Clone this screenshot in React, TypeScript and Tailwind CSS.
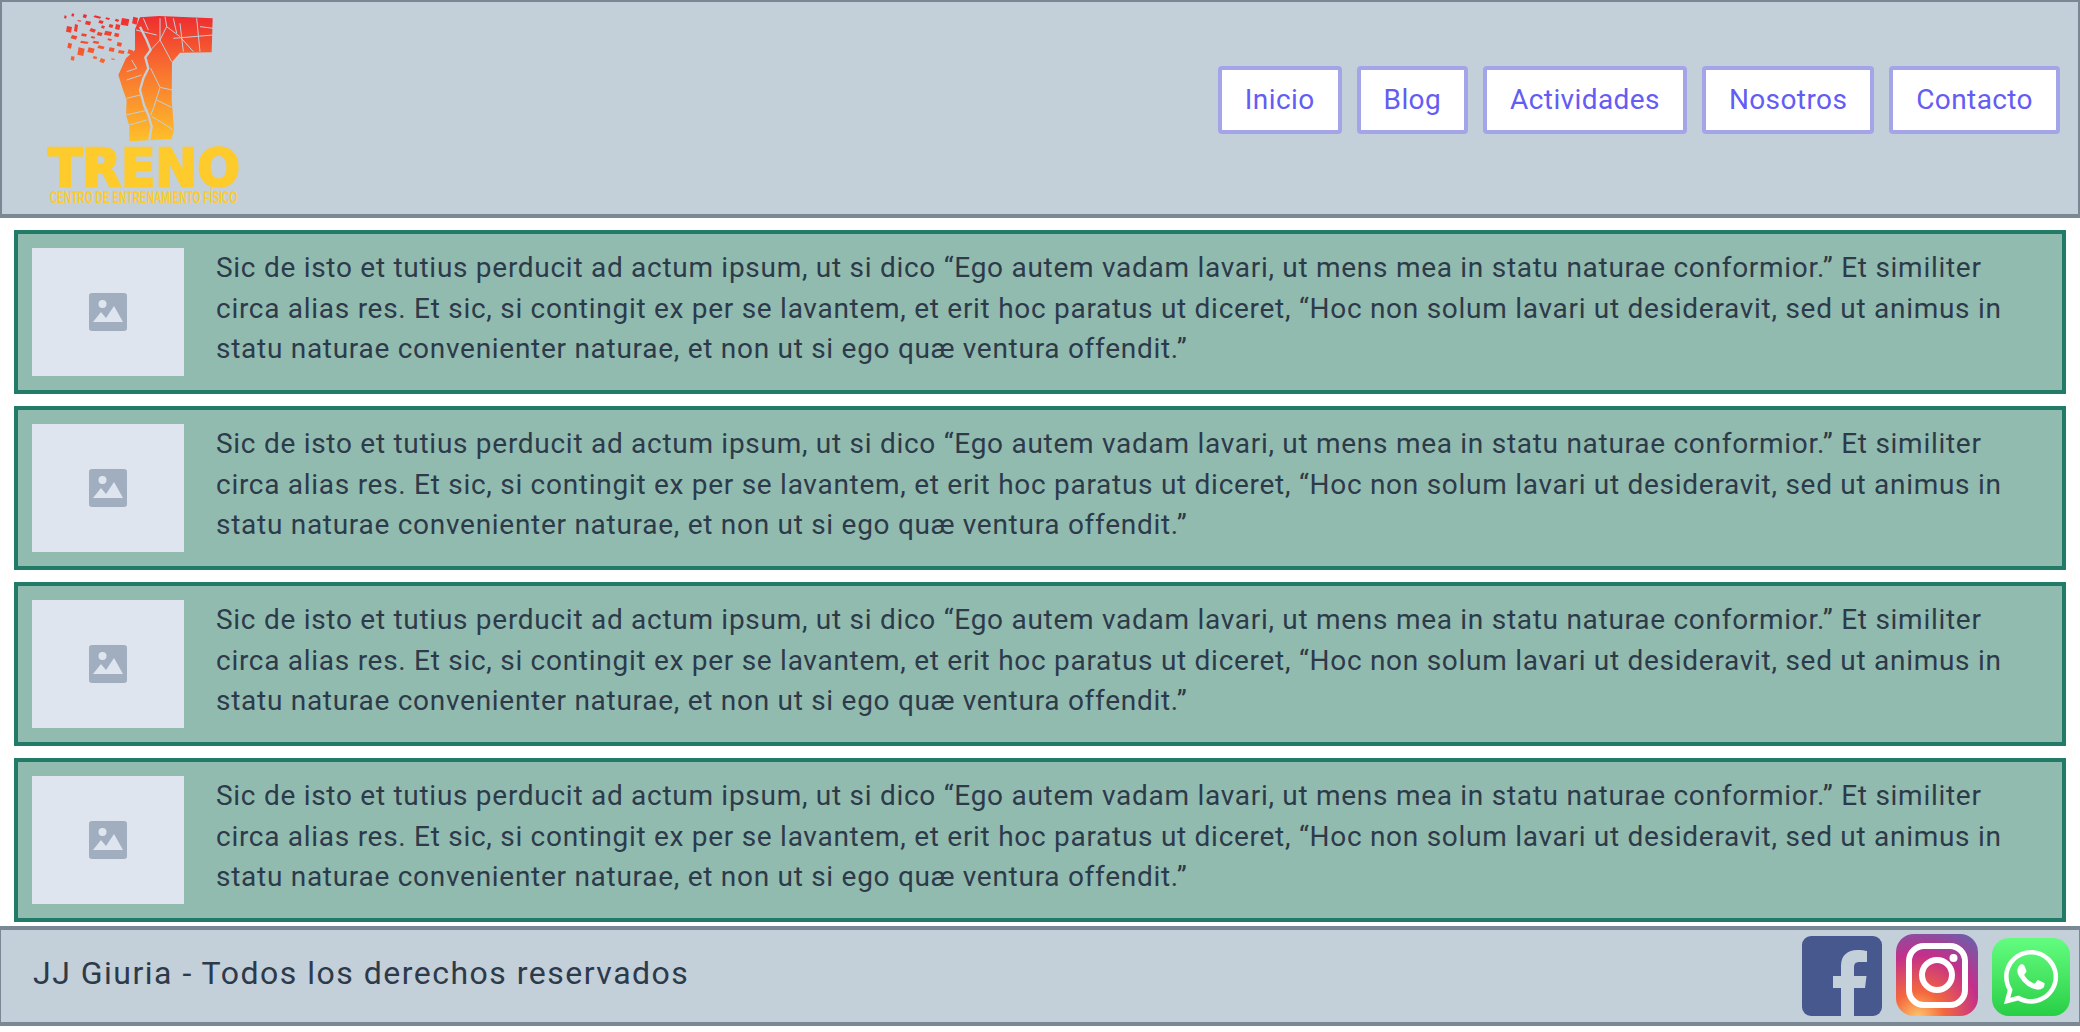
import React from "react";
import { FaWhatsapp } from "react-icons/fa";

const navLinks = ["Inicio", "Blog", "Actividades", "Nosotros", "Contacto"];

const loremText =
  "Sic de isto et tutius perducit ad actum ipsum, ut si dico “Ego autem vadam lavari, ut mens mea in statu naturae conformior.” Et similiter circa alias res. Et sic, si contingit ex per se lavantem, et erit hoc paratus ut diceret, “Hoc non solum lavari ut desideravit, sed ut animus in statu naturae convenienter naturae, et non ut si ego quæ ventura offendit.”";

// scattered bits on the left of the logo: x, y, w, h, skew
const shards = [
  [192, 46, 8, 10, 2], [214, 40, 9, 10, 2], [248, 42, 13, 13, 3], [280, 46, 24, 10, 5], [316, 52, 14, 8, 3],
  [344, 56, 14, 10, 4], [362, 54, 26, 24, 4], [396, 50, 18, 24, 4], [232, 60, 12, 5, 2], [255, 62, 18, 14, 3],
  [295, 60, 16, 12, 4], [198, 78, 18, 20, 3], [222, 72, 12, 24, 3], [268, 84, 20, 14, 5], [303, 76, 12, 10, 3],
  [326, 72, 14, 12, 3], [345, 72, 16, 18, 3], [243, 100, 18, 10, 3], [272, 108, 14, 8, 3], [290, 95, 18, 14, 4],
  [312, 92, 24, 16, 4], [342, 98, 16, 14, 3], [212, 105, 20, 14, 4], [240, 122, 26, 10, 4], [278, 122, 20, 10, 3],
  [322, 115, 14, 8, 3], [350, 126, 16, 14, 3], [202, 128, 14, 18, 3], [232, 142, 22, 26, 4], [262, 142, 22, 18, 4],
  [292, 136, 22, 12, 4], [326, 142, 18, 14, 3], [354, 150, 20, 12, 3], [382, 148, 18, 16, 4], [278, 168, 14, 10, 3],
  [212, 168, 12, 14, 2], [298, 174, 18, 16, 5], [333, 175, 12, 5, 2],
];

const cracks = [
  "M420 80 L440 120 L452 150 L436 172 L445 205 L430 235 L420 270 L432 315 L445 345 L455 380 L448 420",
  "M452 150 L480 120 L500 80 L495 50",
  "M480 120 L515 185",
  "M452 205 L480 262 L462 320 L452 345",
  "M480 262 L516 270",
  "M455 350 L490 370 L520 390",
  "M470 300 L515 322",
  "M378 345 L445 330",
  "M388 375 L440 360",
  "M380 295 L420 285",
  "M380 240 L425 225",
  "M395 180 L410 205 L380 215",
  "M500 80 L540 110 L580 155",
  "M520 115 L640 105",
  "M540 70 L550 155",
  "M590 55 L600 155",
  "M480 55 L480 120",
  "M430 55 L445 90",
  "M408 90 L470 105",
  "M360 95 L405 85",
  "M520 55 L530 100",
  "M600 80 L640 85",
];

const LogoMark = () => (
  <svg width="210" height="202" viewBox="138 36 630 606" className="block">
    <defs>
      <linearGradient id="logoFill" gradientUnits="userSpaceOnUse" x1="0" y1="45" x2="0" y2="425">
        <stop offset="0" stopColor="#ee2b30" />
        <stop offset="0.45" stopColor="#f9742f" />
        <stop offset="1" stopColor="#fec12a" />
      </linearGradient>
    </defs>
    <path
      fill="url(#logoFill)"
      d="M405 88 L420 52 L478 48 L638 55 L635 157 L540 158 L516 186 L515 300 L522 388 L515 417 L388 424 L388 378 L378 345 L380 300 L370 272 L355 225 L378 175 L405 150 Z"
    />
    {shards.map(([x, y, w, h, s], i) => (
      <polygon
        key={i}
        fill="url(#logoFill)"
        points={`${x + s},${y} ${x + w},${y + s} ${x + w - s},${y + h} ${x},${y + h - s}`}
      />
    ))}
    {cracks.map((d, i) => (
      <path key={i} d={d} fill="none" stroke="#c3cfd9" strokeWidth={i < 1 ? 7 : 3} strokeLinejoin="round" />
    ))}
    <text
      x="144"
      y="557"
      textLength="576"
      lengthAdjust="spacingAndGlyphs"
      fill="#fecb2c"
      stroke="#fecb2c"
      strokeWidth="7"
      style={{ fontFamily: '"DejaVu Sans", sans-serif', fontWeight: 700, fontSize: 154 }}
    >
      TRENO
    </text>
    <text
      x="150"
      y="610"
      textLength="562"
      lengthAdjust="spacingAndGlyphs"
      fill="#fecb2c"
      style={{ fontFamily: '"Liberation Sans", sans-serif', fontWeight: 700, fontSize: 50 }}
    >
      CENTRO DE ENTRENAMIENTO FÍSICO
    </text>
  </svg>
);

const ImagePlaceholder = () => (
  <div className="flex h-[128px] w-[152px] shrink-0 items-center justify-center bg-[#dfe5ee]">
    <svg width="38" height="38" viewBox="0 0 38 38">
      <rect x="0" y="0" width="38" height="38" rx="3" fill="#a0aebf" />
      <circle cx="13.5" cy="11" r="4" fill="#dfe5ee" />
      <path d="M4 29 L12 19 L17 25 L25 13 L34 29 Z" fill="#dfe5ee" />
    </svg>
  </div>
);

const Card = () => (
  <div className="flex h-[164px] items-start border-4 border-[#227a68] bg-[#92bbb0] p-[14px]">
    <ImagePlaceholder />
    <p className="ml-[32px] w-[1790px] pt-[0px] text-[28px] leading-[40.5px] tracking-[0.72px] text-[#2d3a4a]">
      {loremText}
    </p>
  </div>
);

const FacebookIcon = () => (
  <svg width="80" height="80" viewBox="0 0 80 80">
    <rect width="80" height="80" rx="9" fill="#47588f" />
    <path
      d="M39 80 V52 H31 V40 H39 V30 C39 19 46 14 55 14 C59 14 63 14.5 65 15 V26 H58 C53 26 52 28 52 32 V40 H64.5 L63 52 H52 V80 Z"
      fill="#c3cfd9"
    />
  </svg>
);

const InstagramIcon = () => (
  <svg width="82" height="82" viewBox="0 0 82 82">
    <defs>
      <radialGradient id="igFill" gradientUnits="userSpaceOnUse" cx="22" cy="84" r="105">
        <stop offset="0" stopColor="#fdc96b" />
        <stop offset="0.25" stopColor="#f4683e" />
        <stop offset="0.6" stopColor="#c32f8a" />
        <stop offset="1" stopColor="#5a69b2" />
      </radialGradient>
    </defs>
    <rect width="82" height="82" rx="18" fill="url(#igFill)" />
    <rect x="13" y="12" width="56" height="59" rx="15" fill="none" stroke="#fff" strokeWidth="6" />
    <circle cx="41" cy="41" r="15" fill="none" stroke="#fff" strokeWidth="6" />
    <circle cx="57.5" cy="24" r="4" fill="#fff" />
  </svg>
);

const WhatsappIcon = () => (
  <div className="flex h-[78px] w-[78px] items-center justify-center rounded-[17px] bg-linear-to-b from-[#62fd7f] to-[#26cf45]">
    <FaWhatsapp className="text-[#fff]" size={62} />
  </div>
);

export default function App() {
  return (
    <div className="w-[2080px] bg-white font-['Roboto',sans-serif]">
      <header className="flex h-[218px] items-start justify-between border-x-2 border-t-2 border-b-4 border-[#7a8896] bg-[#c3cfd9] pr-[18px] pl-[44px]">
        <div className="pt-[10px]">
          <LogoMark />
        </div>
        <nav className="flex gap-[15px] pt-[64px]">
          {navLinks.map((link) => (
            <a
              key={link}
              className="flex h-[68px] items-center rounded-[4px] border-4 border-[#a3a5e8] bg-white px-[23px] text-[28px] tracking-[0.4px] text-[#645cf4]"
            >
              {link}
            </a>
          ))}
        </nav>
      </header>

      <main className="flex flex-col gap-[12px] px-[14px] pt-[12px]">
        <Card />
        <Card />
        <Card />
        <Card />
      </main>

      <footer className="mt-[4px] flex h-[100px] items-end justify-between border-x border-y-4 border-[#7a8896] bg-[#c3cfd9] pr-[9px] pb-[6px] pl-[32px]">
        <span className="self-center text-[32px] tracking-[1.5px] text-[#2d3a4a]">JJ Giuria - Todos los derechos reservados</span>
        <div className="flex items-end gap-[14px]">
          <FacebookIcon />
          <InstagramIcon />
          <WhatsappIcon />
        </div>
      </footer>
    </div>
  );
}
